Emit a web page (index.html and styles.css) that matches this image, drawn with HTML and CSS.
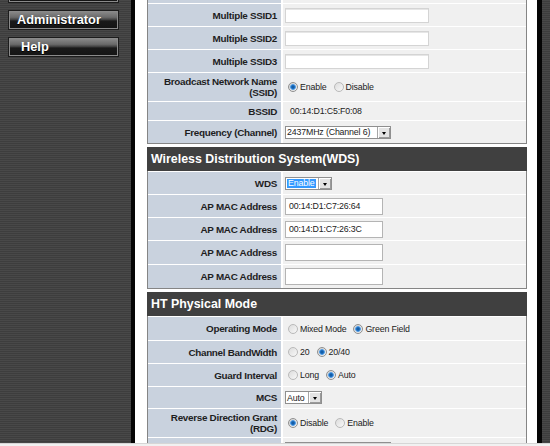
FILE: index.html
```html
<!DOCTYPE html>
<html>
<head>
<meta charset="utf-8">
<title>Wireless Settings</title>
<link rel="stylesheet" href="styles.css">
</head>
<body>
<div class="viewport">
  <div class="page">
    <aside class="sidebar">
      <div class="navbtn"></div>
      <div class="navbtn">Administrator</div>
      <div class="navbtn help">Help</div>
    </aside>
    <main class="content">
      <section class="panel">
        <div class="row h22"><div class="label"></div><div class="value"><span class="textbox wide"></span></div></div>
        <div class="row h22"><div class="label">Multiple SSID1</div><div class="value"><span class="textbox wide"></span></div></div>
        <div class="row h22"><div class="label">Multiple SSID2</div><div class="value"><span class="textbox wide"></span></div></div>
        <div class="row h22"><div class="label">Multiple SSID3</div><div class="value"><span class="textbox wide"></span></div></div>
        <div class="row h28"><div class="label">Broadcast Network Name<br>(SSID)</div><div class="value"><span class="opt"><span class="radio on"></span>Enable</span><span class="opt"><span class="radio"></span>Disable</span></div></div>
        <div class="row h18"><div class="label">BSSID</div><div class="value"><span class="plain">00:14:D1:C5:F0:08</span></div></div>
        <div class="row h22"><div class="label">Frequency (Channel)</div><div class="value"><span class="select freq"><span class="sel-text">2437MHz (Channel 6)</span><span class="sel-btn"></span></span></div></div>
      </section>

      <section class="panel">
        <div class="head">Wireless Distribution System(WDS)</div>
        <div class="row h22"><div class="label">WDS</div><div class="value"><span class="select wds"><span class="sel-text selected">Enable</span><span class="sel-btn"></span></span></div></div>
        <div class="row h22"><div class="label">AP MAC Address</div><div class="value"><span class="textbox mac">00:14:D1:C7:26:64</span></div></div>
        <div class="row h22"><div class="label">AP MAC Address</div><div class="value"><span class="textbox mac">00:14:D1:C7:26:3C</span></div></div>
        <div class="row h23"><div class="label">AP MAC Address</div><div class="value"><span class="textbox mac"></span></div></div>
        <div class="row h23"><div class="label">AP MAC Address</div><div class="value"><span class="textbox mac"></span></div></div>
      </section>

      <section class="panel">
        <div class="head">HT Physical Mode</div>
        <div class="row h23"><div class="label">Operating Mode</div><div class="value"><span class="opt"><span class="radio"></span>Mixed Mode</span><span class="opt"><span class="radio on"></span>Green Field</span></div></div>
        <div class="row h22"><div class="label">Channel BandWidth</div><div class="value"><span class="opt"><span class="radio"></span>20</span><span class="opt"><span class="radio on"></span>20/40</span></div></div>
        <div class="row h22"><div class="label">Guard Interval</div><div class="value"><span class="opt"><span class="radio"></span>Long</span><span class="opt"><span class="radio on"></span>Auto</span></div></div>
        <div class="row h21"><div class="label">MCS</div><div class="value"><span class="select mcs"><span class="sel-text">Auto</span><span class="sel-btn"></span></span></div></div>
        <div class="row h28"><div class="label">Reverse Direction Grant<br>(RDG)</div><div class="value"><span class="opt"><span class="radio on"></span>Disable</span><span class="opt"><span class="radio"></span>Enable</span></div></div>
        <div class="row h22 last"><div class="label"></div><div class="value"><span class="select ext"><span class="sel-text"></span><span class="sel-btn"></span></span></div></div>
      </section>
    </main>
    <div class="rightbar"></div>
  </div>
</div>
</body>
</html>
```

FILE: styles.css
```css
html, body {
  margin: 0;
  padding: 0;
}
body {
  background: #f1f1f1;
  font-family: "Liberation Sans", Arial, sans-serif;
  width: 550px;
  height: 446px;
  overflow: hidden;
}
.viewport {
  height: 443px;
  overflow: hidden;
  border-bottom: 1px solid #d6d6d6;
}
.page {
  display: flex;
  margin-top: -20px;
  min-height: 480px;
}
.sidebar {
  width: 131px;
  border-right: 4px solid #050505;
  background: repeating-linear-gradient(to bottom, #484848 0, #484848 1px, #3d3d3d 1px, #3d3d3d 2px);
  padding-top: 3px;
  display: flex;
  flex-direction: column;
  gap: 7px;
}
.navbtn {
  margin-left: 8px;
  width: 111px;
  height: 20px;
  box-sizing: border-box;
  border: 1px solid #1c1c1c;
  box-shadow: inset 0 0 0 1px #8a8a8a;
  background: linear-gradient(to bottom, #8c8c8c 0%, #6a6a6a 35%, #3a3a3a 50%, #1a1a1a 55%, #141414 100%);
  color: #fff;
  font-weight: bold;
  font-size: 12.8px;
  line-height: 18px;
  padding-left: 8px;
  text-shadow: 0 1px 0 #000;
}
.navbtn.help {
  padding-left: 12px;
}
.content {
  width: 380px;
  background: #fff;
  padding: 0 10px 0 12px;
  border-right: 5px solid #050505;
  display: flex;
  flex-direction: column;
  gap: 3px;
}
.rightbar {
  flex: 1;
  background: repeating-linear-gradient(to bottom, #484848 0, #484848 1px, #3d3d3d 1px, #3d3d3d 2px);
}
.panel {
  border: 1px solid #858585;
  background: #fff;
  display: flex;
  flex-direction: column;
  gap: 1px;
}
.head {
  background: #404040;
  color: #fff;
  font-weight: bold;
  font-size: 12.4px;
  height: 24px;
  line-height: 24px;
  margin: -1px -1px 0 -1px;
  padding-left: 4px;
  white-space: nowrap;
}
.row {
  display: grid;
  grid-template-columns: 133px 1fr;
  column-gap: 2px;
}
.h18 { height: 18px; }
.h21 { height: 21px; }
.h22 { height: 22px; }
.h23 { height: 23px; }
.h28 { height: 28px; }
.label {
  background: #c9d2de;
  color: #1e1e1e;
  font-weight: bold;
  font-size: 9.9px;
  letter-spacing: -0.3px;
  line-height: 11px;
  text-align: right;
  padding-right: 4px;
  display: flex;
  align-items: center;
  justify-content: flex-end;
  white-space: nowrap;
}
.value {
  background: #f0f0f0;
  display: flex;
  align-items: center;
  padding-left: 2px;
  font-size: 8.8px;
  letter-spacing: -0.15px;
  color: #222;
  gap: 7px;
}
.textbox {
  display: block;
  box-sizing: border-box;
  background: #fff;
  color: #222;
  white-space: nowrap;
}
.textbox.wide {
  width: 144px;
  height: 15px;
  border: 1px solid #d4d4d4;
  box-shadow: inset 0 1px 0 #e6e6e6;
}
.textbox.mac {
  width: 98px;
  height: 17px;
  line-height: 15px;
  border: 1px solid #b4b4b4;
  padding-left: 3px;
}
.plain {
  padding-left: 5px;
}
.opt {
  display: inline-flex;
  align-items: center;
  gap: 2px;
  padding-left: 3px;
}
.opt + .opt {
  padding-left: 0;
}
.radio {
  width: 10px;
  height: 10px;
  box-sizing: border-box;
  border-radius: 50%;
  border: 1px solid #b9b9b9;
  background: linear-gradient(135deg, #dcdcdc, #f8f8f8);
  display: inline-block;
}
.radio.on {
  border-color: #8f8f8f;
  background: radial-gradient(circle at 50% 50%, #0d4f8f 0, #1f6fc0 1.6px, #5fa4e6 2.6px, rgba(255,255,255,0) 3.2px), linear-gradient(135deg, #d0d0d0, #f4f4f4);
}
.select {
  display: inline-flex;
  align-items: stretch;
  box-sizing: border-box;
  height: 13px;
  border: 1px solid #8f8f8f;
  background: #fff;
}
.sel-text {
  display: flex;
  align-items: center;
  padding-left: 1px;
  white-space: nowrap;
}
.sel-text.selected {
  background: #3399ff;
  color: #fff;
  margin: 1px;
  padding: 0 1px;
}
.sel-btn {
  width: 13px;
  margin-left: auto;
  box-sizing: border-box;
  background: #e4e4e4;
  border-left: 1px solid #a6a6a6;
  box-shadow: inset 1px 1px 0 #fff, inset -1px -1px 0 #9a9a9a;
  position: relative;
}
.sel-btn::after {
  content: "";
  position: absolute;
  left: 4px;
  top: 5px;
  border-left: 2.5px solid transparent;
  border-right: 2.5px solid transparent;
  border-top: 3px solid #000;
}
.select.freq { width: 106px; }
.select.wds { width: 47px; }
.select.mcs { width: 37px; }
.select.ext { width: 106px; }
.row.last .value {
  align-items: flex-start;
  padding-top: 4px;
  box-sizing: border-box;
}
```
